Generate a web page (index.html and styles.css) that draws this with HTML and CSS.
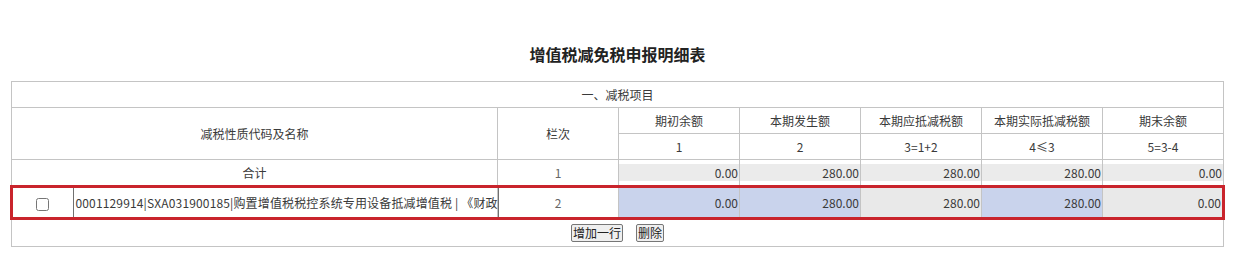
FILE: index.html
```html
<!DOCTYPE html>
<html lang="zh-Hans-CN">
<head>
	<meta charset="UTF-8">
	<title>增值税减免税申报明细表</title>
	<link rel="stylesheet" href="styles.css">
</head>
<body>
<div class="title">增值税减免税申报明细表</div>
<table class="grid">
	<colgroup>
		<col class="c-check">
		<col class="c-name">
		<col class="c-no">
		<col class="c-amt">
		<col class="c-amt">
		<col class="c-amt">
		<col class="c-amt">
		<col class="c-amt">
	</colgroup>
	<tr class="head">
		<td colspan="8">一、减税项目</td>
	</tr>
	<tr class="head">
		<td colspan="2" rowspan="2">减税性质代码及名称</td>
		<td rowspan="2">栏次</td>
		<td>期初余额</td>
		<td>本期发生额</td>
		<td>本期应抵减税额</td>
		<td>本期实际抵减税额</td>
		<td>期末余额</td>
	</tr>
	<tr class="head">
		<td>1</td>
		<td>2</td>
		<td>3=1+2</td>
		<td>4≤3</td>
		<td>5=3-4</td>
	</tr>
	<tr class="total">
		<td colspan="2">合计</td>
		<td class="no">1</td>
		<td><input class="num" type="text" value="0.00" readonly></td>
		<td><input class="num" type="text" value="280.00" readonly></td>
		<td><input class="num" type="text" value="280.00" readonly></td>
		<td><input class="num" type="text" value="280.00" readonly></td>
		<td><input class="num" type="text" value="0.00" readonly></td>
	</tr>
	<tr class="item on">
		<td class="chk"><input type="checkbox"></td>
		<td class="name"><input class="txt" type="text" value="0001129914|SXA031900185|购置增值税税控系统专用设备抵减增值税 | 《财政部 国家税务总局关于增值税税控系统专用设备和技术维护费用抵减增值税税额有关政策的通知》 财税〔2012〕15号" readonly></td>
		<td class="no">2</td>
		<td><input class="num edit" type="text" value="0.00"></td>
		<td><input class="num edit" type="text" value="280.00"></td>
		<td><input class="num" type="text" value="280.00" readonly></td>
		<td><input class="num edit" type="text" value="280.00"></td>
		<td><input class="num" type="text" value="0.00" readonly></td>
	</tr>
	<tr class="ops">
		<td colspan="8">
			<div class="btns">
				<button type="button">增加一行</button>
				<button type="button">删除</button>
			</div>
		</td>
	</tr>
</table>
</body>
</html>
```

FILE: styles.css
```css
body {
    margin: 8px;
    font: 12px "Noto Sans CJK SC", "Noto Sans", sans-serif;
    color: #3a3a3a;
    background: #fff;
}

.title {
    padding-top: 34px;
    margin-bottom: 15px;
    line-height: 24px;
    font-size: 16px;
    font-weight: bold;
    color: #222;
    text-align: center;
}

.grid {
    width: 1212px;
    margin: 0 auto;
    border-collapse: collapse;
    table-layout: fixed;
}

.c-check { width: 62px; }
.c-name { width: 424px; }
.c-no { width: 121px; }
.c-amt { width: 121px; }

.grid td {
    height: 25px;
    padding: 0;
    border: 1px solid #c4c4c4;
    text-align: center;
    line-height: 16px;
}

.grid .no {
    color: #666;
}

.grid input.num {
    display: block;
    width: 100%;
    box-sizing: border-box;
    height: 17px;
    padding: 0 1px 0 0;
    border: none;
    outline: none;
    font: 12px "Noto Sans CJK SC", "Noto Sans", sans-serif;
    color: #3a3a3a;
    text-align: right;
    background: #ebebeb;
}

/* 选中行 */
.item td {
    height: 29px;
    border-top: 3px solid #c9242c;
    border-bottom: 3px solid #c9242c;
}

.item td:first-child {
    border-left: 3px solid #c9242c;
}

.item td:last-child {
    border-right: 3px solid #c9242c;
}

.item .chk {
    border-right: none;
}

.item .chk input {
    width: 13px;
    height: 13px;
    margin: 0 2px 0 0;
    vertical-align: middle;
}

.item .name {
    border-left: none;
    border-right: none;
}

.item input.txt {
    display: block;
    width: calc(100% + 2px);
    box-sizing: border-box;
    height: 29px;
    padding: 0 0 0 1px;
    border: none;
    border-left: 1px solid #707070;
    border-right: 1px solid #707070;
    outline: none;
    font: 12px "Noto Sans CJK SC", "Noto Sans", sans-serif;
    letter-spacing: .15px;
    color: #3a3a3a;
    background: #fff;
}

.item input.num {
    height: 29px;
    background: #e9e9e9;
}

.item input.num.edit {
    background: #c9d3ec;
}

.ops td {
    height: 26px;
}

.btns {
    display: flex;
    justify-content: center;
    gap: 13px;
}

.btns button {
    height: 18px;
    padding: 0 1px;
    border: 1px solid #767676;
    border-radius: 2px;
    font: 12px/16px "Noto Sans CJK SC", "Noto Sans", sans-serif;
    color: #222;
    background: #efefef;
}
```
